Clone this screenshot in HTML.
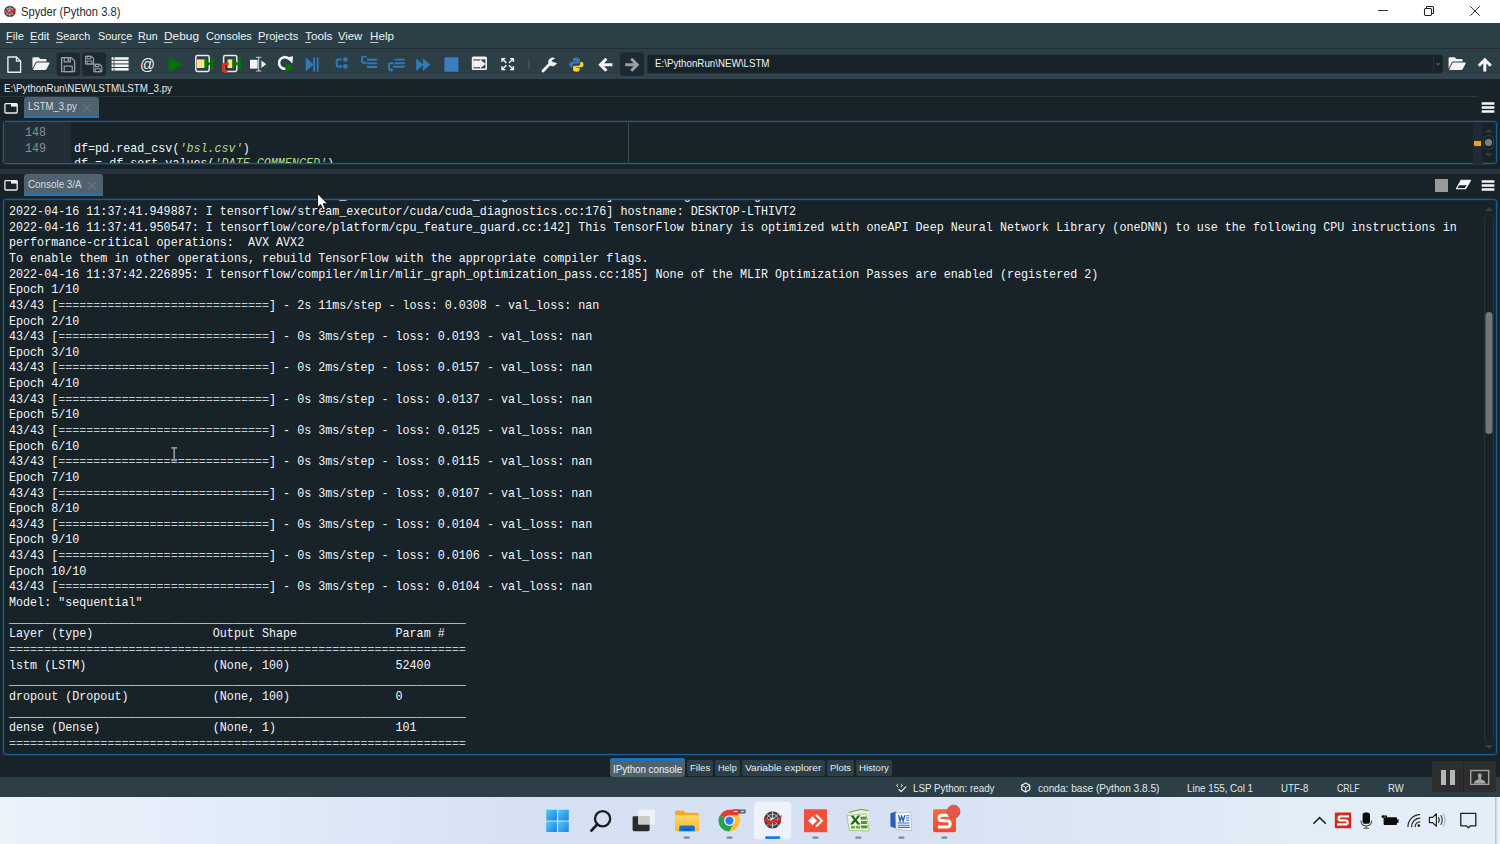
<!DOCTYPE html>
<html>
<head>
<meta charset="utf-8">
<title>Spyder (Python 3.8)</title>
<style>
*{box-sizing:border-box;margin:0;padding:0}
html,body{width:1500px;height:844px;overflow:hidden;background:#172229;font-family:"Liberation Sans",sans-serif;}
body{position:relative;color:#e6ebf0}
.abs{position:absolute}
#title{left:0;top:0;width:1500px;height:23px;background:#ffffff;color:#111;font-size:12px}
#title .t{left:21px;top:4px;font-size:12.3px;color:#1a1a1a;white-space:nowrap}
#menubar{left:0;top:23px;width:1500px;height:26px;background:#2d3f46;border-bottom:1px solid #222d36}

#menubar u{text-decoration:underline;text-underline-offset:1.500px;text-decoration-thickness:0.800px;text-decoration-color:rgba(238,242,245,.75)}
#toolbar{left:0;top:49px;width:1500px;height:29.5px;background:#2d3f46}
#pathrow{left:0;top:78.5px;width:1500px;height:18px;background:#172229}

.tabbar{left:0;width:1500px;background:#172229}
.tab{background:#50626d;color:#e8edf1;font-size:10.6px;border-bottom:2.500px solid #1f73b8;white-space:nowrap}
.pane{background:#172229;border:1px solid #1c5c90;border-radius:3px;box-shadow:0 0 0 1px rgba(28,92,144,.26), inset 0 0 0 1px rgba(28,92,144,.16)}
.mono{font-family:"Liberation Mono",monospace}
#console pre{position:absolute;left:5px;top:-11.635px;font-family:"Liberation Mono",monospace;font-size:13.244px;line-height:15.635px;color:#f4f6f7;white-space:pre;transform:scaleX(0.8849);transform-origin:0 0}
#statusbar{left:0;top:777px;width:1500px;height:20px;background:#2d3f46}

#taskbar{left:0;top:797px;width:1500px;height:47px;background:linear-gradient(90deg,#eaf2fa 0%,#e4edf9 12%,#dae5f6 27%,#d5e0f3 36%,#d7e1f3 60%,#dce7f5 73%,#e2edf7 87%,#e3eef8 100%)}
.btab{position:absolute;top:758px;height:20px;background:#2d3f46;color:#eef2f5;font-size:10.4px;padding-top:4px;text-align:center;white-space:nowrap}
.edl{font-size:13.244px;line-height:16px;white-space:pre;transform:scaleX(0.8849);transform-origin:0 0}
.fit{position:absolute;white-space:nowrap;transform-origin:0 50%;display:inline-block;line-height:1}
/*FIT-START*/
#f1{top:6.53px;transform:scaleX(0.9398)}
#f2{top:7.93px;transform:scaleX(0.9770)}
#f3{top:7.93px;transform:scaleX(1.0008)}
#f4{top:7.93px;transform:scaleX(0.9550)}
#f5{top:7.93px;transform:scaleX(0.9573)}
#f6{top:7.93px;transform:scaleX(0.9494)}
#f7{top:7.93px;transform:scaleX(1.0507)}
#f8{top:7.93px;transform:scaleX(0.9719)}
#f9{top:7.93px;transform:scaleX(0.9871)}
#f10{top:7.93px;transform:scaleX(1.0420)}
#f11{top:7.93px;transform:scaleX(0.9960)}
#f12{top:7.93px;transform:scaleX(1.0323)}
#f14{top:10.20px;transform:scaleX(0.9397)}
#f29{top:7.03px;transform:scaleX(0.8955)}
#f13{top:5.60px;transform:scaleX(0.9446)}
#f15{top:4.57px;transform:scaleX(0.9368)}
#f16{top:5.77px;transform:scaleX(0.9658)}
#f17{top:764.53px;transform:scaleX(0.9709)}
#f18{top:763.19px;transform:scaleX(0.9869)}
#f19{top:763.19px;transform:scaleX(0.9379)}
#f20{top:763.19px;transform:scaleX(1.0522)}
#f21{top:763.19px;transform:scaleX(0.9793)}
#f22{top:763.19px;transform:scaleX(0.9915)}
#f23{top:5.93px;transform:scaleX(0.9245)}
#f24{top:5.93px;transform:scaleX(0.9550)}
#f25{top:5.93px;transform:scaleX(0.9261)}
#f26{top:5.93px;transform:scaleX(0.9162)}
#f27{top:5.93px;transform:scaleX(0.8131)}
#f28{top:5.93px;transform:scaleX(0.8930)}
/*FIT-END*/
.eq{color:#c6cbce}
</style>
</head>
<body>
<!-- TITLE BAR -->
<div id="title" class="abs">
  <svg class="abs" style="left:3px;top:4px" width="14" height="15" viewBox="0 0 14 15">
    <circle cx="6.900" cy="7.400" r="5.700" fill="#3e3e3e"/>
    <path d="M6.900 1.700V13.100M1.200 7.400H12.600M2.900 3.400L10.900 11.400M10.900 3.400L2.900 11.400" stroke="#d8d8d8" stroke-width="0.700"/>
    <circle cx="6.900" cy="7.400" r="3.500" fill="none" stroke="#d8d8d8" stroke-width="0.600"/>
    <circle cx="6.900" cy="7.400" r="1.500" fill="#e8e8e8"/>
    <path d="M1.200 7.200L3.400 5.400L5.600 8L8.200 5.800L10.400 7L12.800 4.200L12.200 7.800L10.200 9.200L8.200 8L5.600 10L3.200 7.400Z" fill="#e0221e"/>
  </svg>
  <span class="fit" id="f1" style="left:21.2px;font-size:11.9px;color:#2a2a2a;--w:99.4;--b:16.6;">Spyder (Python 3.8)</span>
  <svg class="abs" style="left:1376px;top:4px" width="110" height="14" viewBox="0 0 110 14">
    <path d="M2 6.500H12" stroke="#333" stroke-width="1"/>
    <rect x="48.5" y="4.5" width="7" height="7" rx="1.2" fill="none" stroke="#222" stroke-width="1.1"/>
    <path d="M50.5 4V3.2Q50.5 2.5 51.3 2.5H56.3Q57.5 2.5 57.5 3.7V8.7Q57.5 9.5 56.8 9.5H56" fill="none" stroke="#222" stroke-width="1.1"/>
    <path d="M94.200 2.200L103.800 11.800M103.800 2.200L94.200 11.800" stroke="#333" stroke-width="1"/>
  </svg>
</div>

<!-- MENU BAR -->
<div id="menubar" class="abs">
  <span class="fit" id="f2" style="left:5.5px;font-size:11.3px;color:#eef2f5;--w:17.8;--b:17.5;"><u>F</u>ile</span>
  <span class="fit" id="f3" style="left:30px;font-size:11.3px;color:#eef2f5;--w:19.5;--b:17.5;"><u>E</u>dit</span>
  <span class="fit" id="f4" style="left:56.3px;font-size:11.3px;color:#eef2f5;--w:34.2;--b:17.5;"><u>S</u>earch</span>
  <span class="fit" id="f5" style="left:97.5px;font-size:11.3px;color:#eef2f5;--w:34.3;--b:17.5;">Sour<u>c</u>e</span>
  <span class="fit" id="f6" style="left:138.3px;font-size:11.3px;color:#eef2f5;--w:19.7;--b:17.5;"><u>R</u>un</span>
  <span class="fit" id="f7" style="left:164.3px;font-size:11.3px;color:#eef2f5;--w:35.0;--b:17.5;"><u>D</u>ebug</span>
  <span class="fit" id="f8" style="left:205.5px;font-size:11.3px;color:#eef2f5;--w:45.8;--b:17.5;">C<u>o</u>nsoles</span>
  <span class="fit" id="f9" style="left:258px;font-size:11.3px;color:#eef2f5;--w:40.3;--b:17.5;"><u>P</u>rojects</span>
  <span class="fit" id="f10" style="left:304.5px;font-size:11.3px;color:#eef2f5;--w:27.5;--b:17.5;"><u>T</u>ools</span>
  <span class="fit" id="f11" style="left:338.3px;font-size:11.3px;color:#eef2f5;--w:24.2;--b:17.5;"><u>V</u>iew</span>
  <span class="fit" id="f12" style="left:370px;font-size:11.3px;color:#eef2f5;--w:24;--b:17.5;"><u>H</u>elp</span>
</div>

<!-- TOOLBAR -->
<div id="toolbar" class="abs">
<div class="abs" style="left:0;top:24.5px;width:1500px;height:5px;background:#33434d"></div>
<svg class="abs" style="left:0;top:0" width="1500" height="31" viewBox="0 49 1500 31">
<g fill="none" stroke-linejoin="round" stroke-linecap="round">
<!-- new file -->
<path d="M7.9 57H16.4L20.6 61.2V72.2H7.9Z" stroke="#ececec" stroke-width="1.4"/>
<path d="M16.4 57V61.2H20.6" stroke="#ececec" stroke-width="1.2"/>
<!-- open folder -->
<g fill="#f4f4f4" stroke="none">
<path d="M32.4 58.6Q32.4 57.3 33.7 57.3H37.9Q38.6 57.3 39.1 57.8L40.4 59H45.2Q46.5 59 46.5 60.3V61.6H37.2Q35.9 61.6 35.4 62.7L32.4 68.6Z"/>
<path d="M37.3 62.6H48.9Q49.9 62.6 49.4 63.5L46.6 69.1Q46.2 69.9 45.2 69.9H33.6Q32.8 69.9 33.2 69.1L36 63.4Q36.4 62.6 37.3 62.6Z"/>
</g>
<!-- save (disabled) -->
<rect x="56.6" y="52.6" width="23.4" height="23.4" rx="3" fill="#1d2932" stroke="none"/>
<path d="M61.6 57.6H71.3L74.6 60.9V71.6H61.6Z" stroke="#9b9fa2" stroke-width="1.3"/>
<rect x="64.2" y="57.6" width="6.2" height="4.3" stroke="#9b9fa2" stroke-width="1.2"/>
<rect x="67.6" y="58.4" width="1.6" height="2.6" fill="#9b9fa2" stroke="none"/>
<rect x="64.2" y="66.2" width="8" height="5.4" stroke="#9b9fa2" stroke-width="1.2"/>
<!-- save all (disabled) -->
<rect x="82.2" y="52.6" width="23.8" height="23.4" rx="3" fill="#1d2932" stroke="none"/>
<g stroke="#9b9fa2" stroke-width="1.1">
<path d="M85.6 56.4H91.4L93.6 58.6V64H85.6Z"/>
<rect x="87.2" y="56.4" width="3.6" height="2.4"/>
<rect x="87" y="61" width="5" height="3"/>
<path d="M93.8 64.2H99.6L101.8 66.4V71.8H93.8Z"/>
<rect x="95.4" y="64.2" width="3.6" height="2.4"/>
<rect x="95.2" y="68.8" width="5" height="3"/>
</g>
<!-- list -->
<g fill="#f4f4f4" stroke="none">
<rect x="111.6" y="57.2" width="2" height="2.6"/><rect x="114.4" y="57.2" width="14.2" height="2.6"/>
<rect x="111.6" y="60.8" width="2" height="2.6"/><rect x="114.4" y="60.8" width="14.2" height="2.6"/>
<rect x="111.6" y="64.4" width="2" height="2.6"/><rect x="114.4" y="64.4" width="14.2" height="2.6"/>
<rect x="111.6" y="68" width="2" height="2.6"/><rect x="114.4" y="68" width="14.2" height="2.6"/>
</g>
<!-- play -->
<path d="M169.4 57.4L181.6 64.4L169.4 71.4Z" fill="#007600" stroke="#007600" stroke-width="0.6"/>
<!-- run cell -->
<rect x="195.8" y="55.6" width="13.4" height="15.8" rx="1.6" stroke="#ececec" stroke-width="1.500"/>
<rect x="197" y="59.4" width="8.4" height="8.6" fill="#fbe47c" stroke="none"/>
<path d="M204.4 58.8L210.8 63.8L204.4 68.8Z" fill="#007600" stroke="none"/>
<rect x="210.6" y="57.4" width="2.6" height="12" fill="#007600" stroke="none"/>
<!-- run cell advance -->
<rect x="223.6" y="55.6" width="13.2" height="15.8" rx="1.6" stroke="#ececec" stroke-width="1.500"/>
<rect x="227.6" y="59.4" width="6" height="8.6" fill="#fbe47c" stroke="none"/>
<path d="M232.2 58.8L238.6 63.8L232.200 68.8Z" fill="#007600" stroke="none"/>
<rect x="238.4" y="57.4" width="2.6" height="12" fill="#007600" stroke="none"/>
<path d="M228.8 63.8H224.4Q223.200 63.8 223.200 65V70.2Q223.200 71.4 224.4 71.4H227.4" stroke="#f3241b" stroke-width="2.300" stroke-linecap="butt"/>
<!-- run selection -->
<rect x="250" y="59.8" width="7.6" height="8.8" fill="#f4f4f4" stroke="none"/>
<path d="M256.4 57.2H261M256.4 71H261M258.7 57.2V71" stroke="#c8cbcd" stroke-width="1.1"/>
<path d="M261.4 60.4L266.2 64.2L261.4 68Z" fill="#f4f4f4" stroke="none"/>
<!-- rerun -->
<path d="M288.4 58.4A5.800 5.800 0 1 0 289.8 66" stroke="#f4f4f4" stroke-width="2.600" stroke-linecap="butt"/>
<path d="M285.8 57.4L293 56.2L292.4 63.6Z" fill="#f4f4f4" stroke="none"/>
<path d="M285.4 63.4L294 68L285.4 72.6Z" fill="#007600" stroke="none"/>
<!-- debug -->
<g fill="#2f7ab8" stroke="none">
<path d="M305.8 57.4L313.4 64.4L305.8 71.6Z"/>
<rect x="313.2" y="57.4" width="1.8" height="14.2"/>
<rect x="316.8" y="57.4" width="1.8" height="14.2"/>
</g>
<!-- step -->
<g stroke="#2f7ab8" stroke-width="2" stroke-linecap="butt">
<path d="M341.6 59.6H338Q336.6 59.6 336.6 61V65Q336.6 66.4 338 66.4H340.6"/>
</g>
<path d="M340.2 64.2L342.8 66.4L340.2 68.6Z" fill="#2f7ab8" stroke="none"/>
<circle cx="345.4" cy="59.6" r="2.300" fill="#2f7ab8" stroke="none"/>
<circle cx="345.4" cy="66.4" r="2.300" fill="#2f7ab8" stroke="none"/>
<!-- step into -->
<g stroke="#2f7ab8" stroke-width="1.900" stroke-linecap="butt">
<path d="M366.6 56.6H363.4Q362 56.6 362 58V61.4Q362 62.8 363.4 62.8H365.4"/>
<path d="M367 59.8H377.2M367 63.4H377.2M367 67H377.2"/>
</g>
<path d="M364.8 60.8L367.2 62.8L364.8 64.8Z" fill="#2f7ab8" stroke="none"/>
<!-- step return -->
<g stroke="#2f7ab8" stroke-width="1.900" stroke-linecap="butt">
<path d="M394.6 59.6H404.8M394.6 63.2H404.8M393 66.8H404.8"/>
<path d="M393.6 63.2H390.4Q389 63.2 389 64.6V68.6Q389 70 390.4 70H391.6"/>
</g>
<path d="M391 67.8L393.4 70L391 72.2Z" fill="#2f7ab8" stroke="none"/>
<!-- continue -->
<g fill="#2f7ab8" stroke="none">
<path d="M416.2 58.6L423.4 64.8L416.2 71Z"/>
<path d="M423 58.6L430.4 64.8L423 71Z"/>
</g>
<!-- stop -->
<rect x="444.4" y="57.2" width="14" height="14.6" rx="0.6" fill="#3a7ebd" stroke="none"/>
<!-- maximize pane -->
<rect x="471.8" y="56.4" width="15.2" height="13.6" rx="1.6" fill="#f4f4f4" stroke="none"/>
<rect x="473.4" y="59.4" width="12" height="9" fill="#2d3f46" stroke="none"/>
<path d="M473.2 60.6H480V59.3L485.6 63.9L480 68.5V67.2H473.2Z" fill="#f4f4f4" stroke="none"/>
<!-- fullscreen -->
<g stroke="#f4f4f4" stroke-width="1.4" stroke-linecap="butt" stroke-linejoin="miter">
<path d="M502 58.6L506.4 63M502 62V58.6H505.4"/>
<path d="M513.4 58.6L509 63M513.4 62V58.6H510"/>
<path d="M502 69.6L506.4 65.2M502 66.2V69.6H505.4"/>
<path d="M513.4 69.6L509 65.2M513.4 66.2V69.6H510"/>
</g>
<!-- separator -->
<rect x="528.2" y="59.4" width="1.2" height="9.6" fill="#4b5b66" stroke="none"/>
<!-- wrench -->
<path d="M543 71L551 62.6" stroke="#f4f4f4" stroke-width="2.8" stroke-linecap="round"/>
<path d="M554.2 58.2A4 4 0 1 0 556.4 63.2L552.6 62.6L551.4 60.4Z" fill="#f4f4f4" stroke="#f4f4f4" stroke-width="0.8"/>
<!-- python -->
<path d="M576 57.4Q573 57.4 573 59.6V61.4H576.8V62H571.2Q569.2 62 569.2 64.6Q569.2 67.2 571.2 67.2H572.6V65.2Q572.6 63.4 574.6 63.4H578.2Q579.8 63.4 579.8 61.8V59.6Q579.8 57.4 576 57.4Z" fill="#3c78b0" stroke="none"/>
<path d="M576.6 71.8Q579.6 71.8 579.6 69.6V67.8H575.8V67.2H581.6Q583.6 67.2 583.6 64.6Q583.6 62 581.6 62H580.2V64Q580.2 65.8 578.2 65.8H574.6Q573 65.8 573 67.4V69.6Q573 71.8 576.6 71.8Z" fill="#f7cf3f" stroke="none"/>
<!-- back arrow -->
<path d="M600.4 64.8H612.4M606.4 58.8L600.4 64.8L606.4 70.800" stroke="#f7f7f7" stroke-width="3" stroke-linecap="butt" stroke-linejoin="miter"/>
<!-- forward (disabled) -->
<rect x="620" y="52.6" width="24" height="23.4" rx="3" fill="#1d2932" stroke="none"/>
<path d="M625.200 64.8H637.2M631.2 58.8L637.2 64.8L631.2 70.800" stroke="#9b9fa2" stroke-width="3" stroke-linecap="butt" stroke-linejoin="miter"/>
<!-- path box -->
<rect x="647.4" y="54.8" width="795.4" height="18.4" rx="2.4" fill="#172229" stroke="none"/>
<rect x="1433" y="54.8" width="1" height="18.4" fill="#222e38" stroke="none"/>
<path d="M1435.6 63.2H1440.4L1438 65.8Z" fill="#4a5963" stroke="none"/>
<!-- folder right -->
<g fill="#f4f4f4" stroke="none" transform="translate(1416.2,0)">
<path d="M32.4 58.6Q32.4 57.3 33.7 57.3H37.9Q38.6 57.3 39.1 57.8L40.4 59H45.2Q46.5 59 46.5 60.3V61.6H37.2Q35.9 61.6 35.4 62.7L32.4 68.6Z"/>
<path d="M37.3 62.6H48.9Q49.9 62.6 49.4 63.5L46.6 69.1Q46.2 69.9 45.2 69.9H33.6Q32.8 69.9 33.2 69.1L36 63.4Q36.4 62.6 37.3 62.6Z"/>
</g>
<!-- up arrow -->
<path d="M1484.8 71.4V59.8M1478.800 65.800L1484.8 59.800L1490.800 65.800" stroke="#f7f7f7" stroke-width="3" stroke-linecap="butt" stroke-linejoin="miter"/>
</g>
</svg>
<span class="fit" id="f14" style="left:654.5px;font-size:10.4px;color:#f0f3f5;--w:114.5;--b:19;">E:\PythonRun\NEW\LSTM</span>
<span class="fit" id="f29" style="left:140.2px;font-size:16.5px;color:#f4f4f4;--w:15;--b:21;">@</span>

</div>

<!-- PATH ROW -->
<div id="pathrow" class="abs"><span class="fit" id="f13" style="left:4.3px;font-size:10.4px;color:#e8ecef;--w:168;--b:14.4;">E:\PythonRun\NEW\LSTM\LSTM_3.py</span></div>

<!-- EDITOR TABBAR -->
<div class="abs tabbar" style="top:97px;height:22px">
<div class="abs" style="left:0;top:-1px;width:1478px;height:1px;background:#2a3640"></div>
<svg class="abs" style="left:3px;top:5px" width="16" height="13" viewBox="0 0 16 13"><rect x="1.9" y="1.6" width="12.3" height="9.4" rx="1" fill="none" stroke="#f0f0f0" stroke-width="1.3"/><rect x="8" y="1.6" width="6.2" height="3" fill="#f0f0f0"/></svg>
<div class="abs tab" style="left:24px;top:0;width:75px;height:21px;border-radius:3px 3px 0 0"><span class="fit" id="f15" style="left:3.5px;font-size:10.2px;color:#d6dde2;--w:48.8;--b:13.200000000000003;">LSTM_3.py</span><svg class="abs" style="left:58px;top:6px" width="10" height="10" viewBox="0 0 10 10"><path d="M1.2 1.2L8.6 8.6M8.6 1.2L1.2 8.6" stroke="#6b7a85" stroke-width="1.1"/></svg></div>
<svg class="abs" style="left:1481px;top:5.300px" width="14" height="12" viewBox="0 0 14 12"><path d="M0.7 1.5H13.4M0.7 5.5H13.4M0.7 9.5H13.4" stroke="#f7f7f7" stroke-width="2.5"/></svg>
</div>

<!-- EDITOR PANE -->
<div id="editor" class="abs pane" style="left:3px;top:121px;width:1494px;height:43px">
<div class="abs" style="left:0;top:0;width:67px;height:100%;background:#212d37"></div>
<div class="abs mono" style="left:0;top:0;width:1480px;height:100%;overflow:hidden">
<div class="abs edl" style="left:21px;top:3px;color:#858f96">148</div>
<div class="abs edl" style="left:21px;top:19px;color:#858f96">149</div>
<div class="abs edl" style="left:70px;top:19px;color:#f4f6f7">df=pd.read_csv(<i style="color:#aedb84">'bsl.csv'</i>)</div>
<div class="abs edl" style="left:70px;top:34px;color:#f4f6f7">df = df.sort_values(<i style="color:#aedb84">'DATE_COMMENCED'</i>)</div>
</div>
<div class="abs" style="left:623.5px;top:1px;width:1px;height:41px;background:#3a4650"></div>
<div class="abs" style="left:1468.500px;top:1px;width:9px;height:41px;background:#1f2a32"></div>
<div class="abs" style="left:1469.600px;top:18.600px;width:7px;height:5px;background:#e9a21a"></div>
<svg class="abs" style="left:1476.700px;top:0.300px" width="14" height="41" viewBox="0 0 14 41"><path d="M3.5 10.5L7.5 6.5L11.5 10.5Z" fill="#2d3944"/><path d="M3.5 31L7.5 35L11.5 31Z" fill="#2d3944"/><rect x="2.5" y="13.5" width="10" height="14" rx="4" fill="none" stroke="#2d3944" stroke-width="1"/><circle cx="7.5" cy="20.5" r="3.6" fill="#7a7e82"/></svg>
</div>

<!-- SPLITTER -->
<div class="abs" style="left:0;top:168.5px;width:1500px;height:5px;background:#27333c"></div>

<!-- CONSOLE TABBAR -->
<div class="abs tabbar" style="top:174px;height:22px">
<svg class="abs" style="left:3px;top:5px" width="16" height="13" viewBox="0 0 16 13"><rect x="1.9" y="1.6" width="12.3" height="9.4" rx="1" fill="none" stroke="#f0f0f0" stroke-width="1.3"/><rect x="8" y="1.6" width="6.2" height="3" fill="#f0f0f0"/></svg>
<div class="abs tab" style="left:24px;top:0;width:79px;height:21.5px;border-radius:3px 3px 0 0"><span class="fit" id="f16" style="left:3.7px;font-size:10.2px;color:#d6dde2;--w:53.6;--b:14.4;">Console 3/A</span><svg class="abs" style="left:62.5px;top:6.5px" width="10" height="10" viewBox="0 0 10 10"><path d="M1.2 1.2L8.6 8.6M8.6 1.2L1.2 8.6" stroke="#6b7a85" stroke-width="1.1"/></svg></div>
<div class="abs" style="left:1435px;top:5px;width:12.5px;height:12.5px;background:#9a9a9a"></div>
<svg class="abs" style="left:1455px;top:4px" width="18" height="14" viewBox="0 0 18 14"><path d="M6.2 2.2H15.6L10.6 10.8H1.4Z" fill="#f7f7f7"/><path d="M3.6 7.2H11.6L9.8 10H2Z" fill="#172229"/><path d="M6.2 2.2H15.6L10.6 10.8H1.4Z" fill="none" stroke="#f7f7f7" stroke-width="1.1" stroke-linejoin="round"/></svg>
<svg class="abs" style="left:1481px;top:5.5px" width="14" height="12" viewBox="0 0 14 12"><path d="M0.7 1.5H13.4M0.7 5.5H13.4M0.7 9.5H13.4" stroke="#f7f7f7" stroke-width="2.5"/></svg>
</div>

<!-- CONSOLE PANE -->
<div id="console" class="abs pane" style="left:3px;top:199px;width:1494px;height:556px;overflow:hidden">
<pre>2022-04-16 11:37:41.949877: I tensorflow/stream_executor/cuda/cuda_diagnostics.cc:169] retrieving CUDA diagnostic information for host: DESKTOP-LTHIVT2
2022-04-16 11:37:41.949887: I tensorflow/stream_executor/cuda/cuda_diagnostics.cc:176] hostname: DESKTOP-LTHIVT2
2022-04-16 11:37:41.950547: I tensorflow/core/platform/cpu_feature_guard.cc:142] This TensorFlow binary is optimized with oneAPI Deep Neural Network Library (oneDNN) to use the following CPU instructions in
performance-critical operations:  AVX AVX2
To enable them in other operations, rebuild TensorFlow with the appropriate compiler flags.
2022-04-16 11:37:42.226895: I tensorflow/compiler/mlir/mlir_graph_optimization_pass.cc:185] None of the MLIR Optimization Passes are enabled (registered 2)
Epoch 1/10
43/43 [<span class="eq">==============================</span>] - 2s 11ms/step - loss: 0.0308 - val_loss: nan
Epoch 2/10
43/43 [<span class="eq">==============================</span>] - 0s 3ms/step - loss: 0.0193 - val_loss: nan
Epoch 3/10
43/43 [<span class="eq">==============================</span>] - 0s 2ms/step - loss: 0.0157 - val_loss: nan
Epoch 4/10
43/43 [<span class="eq">==============================</span>] - 0s 3ms/step - loss: 0.0137 - val_loss: nan
Epoch 5/10
43/43 [<span class="eq">==============================</span>] - 0s 3ms/step - loss: 0.0125 - val_loss: nan
Epoch 6/10
43/43 [<span class="eq">==============================</span>] - 0s 3ms/step - loss: 0.0115 - val_loss: nan
Epoch 7/10
43/43 [<span class="eq">==============================</span>] - 0s 3ms/step - loss: 0.0107 - val_loss: nan
Epoch 8/10
43/43 [<span class="eq">==============================</span>] - 0s 3ms/step - loss: 0.0104 - val_loss: nan
Epoch 9/10
43/43 [<span class="eq">==============================</span>] - 0s 3ms/step - loss: 0.0106 - val_loss: nan
Epoch 10/10
43/43 [<span class="eq">==============================</span>] - 0s 3ms/step - loss: 0.0104 - val_loss: nan
Model: "sequential"
_________________________________________________________________
Layer (type)                 Output Shape              Param #
<span class="eq">=================================================================</span>
lstm (LSTM)                  (None, 100)               52400
_________________________________________________________________
dropout (Dropout)            (None, 100)               0
_________________________________________________________________
dense (Dense)                (None, 1)                 101
<span class="eq">=================================================================</span></pre>
<svg class="abs" style="left:1479px;top:5px" width="12" height="548" viewBox="0 0 12 548"><path d="M2 6L6 2L10 6Z" fill="#34414b"/><path d="M2 540L6 544L10 540Z" fill="#34414b"/><rect x="1.5" y="9.5" width="9" height="528" rx="4" fill="none" stroke="#26323c" stroke-width="1"/><rect x="2.5" y="107" width="7" height="122" rx="3.5" fill="#71767a"/></svg>
</div>

<!-- BOTTOM TABS -->
<div class="abs" style="left:609.5px;top:758px;width:75.5px;height:19px;background:#50616c;border-top:3px solid #1a72bb;border-radius:2px 2px 3px 3px"></div>
<div class="btab" style="left:609.5px;width:75.5px;top:758px;background:none;padding-top:6px"></div><span class="fit" id="f17" style="left:612.8px;font-size:10px;color:#eef2f5;--w:69.1;--b:773;">IPython console</span>
<div class="btab" style="left:687px;width:26px;top:760px;height:15.5px;padding-top:2px;border-radius:2px"></div><span class="fit" id="f18" style="left:689.8px;font-size:9.7px;color:#e6ebef;--w:20.2;--b:771.4;">Files</span>
<div class="btab" style="left:715px;width:25px;top:760px;height:15.5px;padding-top:2px;border-radius:2px"></div><span class="fit" id="f19" style="left:718.3px;font-size:9.7px;color:#e6ebef;--w:18.7;--b:771.4;">Help</span>
<div class="btab" style="left:742px;width:83px;top:760px;height:15.5px;padding-top:2px;border-radius:2px"></div><span class="fit" id="f20" style="left:745.3px;font-size:9.7px;color:#e6ebef;--w:76.3;--b:771.4;">Variable explorer</span>
<div class="btab" style="left:826.5px;width:27px;top:760px;height:15.5px;padding-top:2px;border-radius:2px"></div><span class="fit" id="f21" style="left:829.8px;font-size:9.7px;color:#e6ebef;--w:21.1;--b:771.4;">Plots</span>
<div class="btab" style="left:855.5px;width:36px;top:760px;height:15.5px;padding-top:2px;border-radius:2px"></div><span class="fit" id="f22" style="left:858.9px;font-size:9.7px;color:#e6ebef;--w:29.9;--b:771.4;">History</span>

<!-- STATUS BAR -->
<div id="statusbar" class="abs">
<svg class="abs" style="left:894px;top:4px" width="14" height="13" viewBox="0 0 14 13"><path d="M4.200 3.200L2.600 4.600L4.200 6M6.800 3.200L8.400 4.600L6.800 6" fill="none" stroke="#e8edf0" stroke-width="1"/><path d="M4.600 8.200L7.200 10.700L12 5.700" fill="none" stroke="#e8edf0" stroke-width="1.200"/></svg>
<span class="fit" id="f23" style="left:912.5px;font-size:10.6px;color:#e2e7eb;--w:81.5;--b:14.9;">LSP Python: ready</span>
<svg class="abs" style="left:1020px;top:4px" width="12" height="13" viewBox="0 0 12 13"><path d="M5.700 1.900L9.700 4.200V8.800L5.700 11.100L1.700 8.800V4.200Z" fill="none" stroke="#e8edf0" stroke-width="1.200" stroke-linejoin="round"/><path d="M1.700 4.200L5.700 6.500L9.700 4.200M5.700 6.500V11.100" fill="none" stroke="#e8edf0" stroke-width="1"/></svg>
<span class="fit" id="f24" style="left:1037.5px;font-size:10.6px;color:#e2e7eb;--w:121.5;--b:14.9;">conda: base (Python 3.8.5)</span>
<span class="fit" id="f25" style="left:1186.5px;font-size:10.6px;color:#e2e7eb;--w:66.0;--b:14.9;">Line 155, Col 1</span>
<span class="fit" id="f26" style="left:1281px;font-size:10.6px;color:#e2e7eb;--w:27.5;--b:14.9;">UTF-8</span>
<span class="fit" id="f27" style="left:1336.5px;font-size:10.6px;color:#e2e7eb;--w:22.5;--b:14.9;">CRLF</span>
<span class="fit" id="f28" style="left:1387.6px;font-size:10.6px;color:#e2e7eb;--w:15.6;--b:14.9;">RW</span>
</div>

<!-- TASKBAR -->
<div id="taskbar" class="abs">
<svg class="abs" style="left:0;top:0" width="1500" height="47" viewBox="0 797 1500 47">
<defs>
<linearGradient id="wg" x1="0" y1="0" x2="1" y2="1"><stop offset="0" stop-color="#58c8f8"/><stop offset="1" stop-color="#1a84dc"/></linearGradient>
<linearGradient id="fg" x1="0" y1="0" x2="0" y2="1"><stop offset="0" stop-color="#ffd86a"/><stop offset="1" stop-color="#f7b92e"/></linearGradient>
<linearGradient id="sg" x1="0" y1="0" x2="0" y2="1"><stop offset="0" stop-color="#f46a3c"/><stop offset="1" stop-color="#ee4a2c"/></linearGradient>
</defs>
<!-- windows -->
<g fill="url(#wg)">
<rect x="546.2" y="809.8" width="10.8" height="10.6" rx="0.8"/><rect x="558" y="809.8" width="10.8" height="10.6" rx="0.8"/>
<rect x="546.2" y="821.4" width="10.8" height="10.6" rx="0.8"/><rect x="558" y="821.4" width="10.8" height="10.6" rx="0.8"/>
</g>
<!-- search -->
<circle cx="602.6" cy="818.8" r="7.6" fill="none" stroke="#1c1c1c" stroke-width="2.3"/>
<path d="M597.2 824.4L591.4 830.6" stroke="#1c1c1c" stroke-width="2.8" stroke-linecap="round"/>
<!-- task view -->
<rect x="632.6" y="816.2" width="17" height="15" rx="1.4" fill="#2a2a2a"/>
<rect x="638" y="809.8" width="17" height="14.6" rx="1.4" fill="#f2f3f5" fill-opacity="0.86"/>
<rect x="638" y="816.2" width="11.6" height="8.2" fill="#c9c9c9"/>
<!-- explorer -->
<path d="M675.2 812.2Q675.2 810.4 677 810.4H682.6Q683.6 810.4 684.2 811.2L685.4 812.8H697Q698.8 812.8 698.8 814.6V829.4Q698.8 831.2 697 831.2H677Q675.2 831.2 675.2 829.4Z" fill="#f0a81c"/>
<path d="M675.2 815.2H698.8V829.4Q698.8 831.2 697 831.2H677Q675.2 831.2 675.2 829.4Z" fill="url(#fg)"/>
<path d="M679.2 831.2V827.4Q679.2 825.4 681.2 825.4H692.8Q694.8 825.4 694.8 827.4V831.2Z" fill="#1273cf"/>
<rect x="683" y="828.6" width="8" height="1.6" rx="0.8" fill="#0c5aa8"/>
<rect x="683.6" y="836.6" width="6.2" height="2.2" rx="1.1" fill="#7f8792"/>
<!-- chrome -->
<circle cx="729.4" cy="820.6" r="10.8" fill="#fff"/>
<path d="M729.4 820.6L720.05 815.2A10.8 10.8 0 0 1 738.75 815.2Z" fill="#e33e2b"/>
<path d="M729.4 809.8A10.8 10.8 0 0 1 738.75 815.2H729.4Z" fill="#e33e2b"/>
<path d="M720.05 815.2A10.8 10.8 0 0 0 729.4 831.4L734.1 823.3L729.4 820.6Z" fill="#2da04a"/>
<path d="M720.05 815.2L724.7 823.3L729.4 831.4A10.8 10.8 0 0 1 720.05 815.2Z" fill="#2da04a"/>
<path d="M738.75 815.2A10.8 10.8 0 0 1 729.4 831.4L734.1 823.3Q735.6 820 734.1 817.9L729.4 815.2Z" fill="#f7c02d"/>
<circle cx="729.4" cy="820.6" r="5.3" fill="#fff"/>
<circle cx="729.4" cy="820.6" r="4.2" fill="#2f7be8"/>
<rect x="732.2" y="809.4" width="13.4" height="4.2" rx="0.8" fill="#555b66"/>
<rect x="732.2" y="809.4" width="7" height="4.2" rx="0.8" fill="#d6362c"/>
<rect x="733.6" y="810.8" width="4" height="1.3" fill="#f6d6d2"/><rect x="740.8" y="810.8" width="3.4" height="1.3" fill="#d8dade"/>
<rect x="726.4" y="836.6" width="6.2" height="2.2" rx="1.1" fill="#7f8792"/>
<!-- spyder active -->
<rect x="754" y="801.8" width="37" height="37.4" rx="4" fill="#eef3fb"/>
<circle cx="772.6" cy="819.8" r="8.600" fill="#404040"/>
<path d="M772.6 811.200V828.400M764 819.8H781.200M766.500 813.700L778.700 825.900M778.700 813.700L766.500 825.900" stroke="#d4d7dc" stroke-width="0.900"/>
<circle cx="772.6" cy="819.8" r="2.400" fill="#e4e7ec"/>
<circle cx="772.6" cy="819.8" r="5.600" fill="none" stroke="#d4d7dc" stroke-width="0.800"/>
<path d="M763.2 819.4L766 817.2L769.6 821.8L773.6 818.4L777.6 820.2L782 814.6L780.6 820.8L777.6 823.2L773.8 821.6L769.4 825L765.2 820.4Z" fill="#e8201c"/>
<rect x="765" y="836.2" width="15.4" height="2.9" rx="1.45" fill="#1a7bdc"/>
<!-- anydesk -->
<rect x="804" y="809.2" width="23" height="23" rx="0.6" fill="#f0503a"/>
<path d="M808.2 820.7L812.6 816.3L817 820.7L812.6 825.1Z" fill="#fff"/>
<path d="M815.4 815.6L816.8 814.2L823.3 820.7L816.8 827.2L815.4 825.8L820.5 820.7Z" fill="#fff"/>
<rect x="812.4" y="836.6" width="6.2" height="2.2" rx="1.1" fill="#7f8792"/>
<!-- excel -->
<path d="M848.6 812.4L861 809.4L868.6 810.6V828.8L852.6 830.4Z" fill="#e9f0e3"/>
<path d="M848.6 812.4L861 809.4L868.6 810.6" fill="none" stroke="#79b257" stroke-width="1.3"/>
<path d="M847 815.6L866.2 813.8L869.2 831L849.2 830.4Z" fill="#f4f8f0" stroke="#8fbf6e" stroke-width="0.8"/>
<rect x="860.6" y="816.6" width="6" height="3" fill="#4e9a2e" transform="rotate(-2 863 818)"/>
<rect x="860.9" y="821" width="6" height="3" fill="#4e9a2e"/>
<rect x="861.1" y="825.4" width="6.4" height="3" fill="#4e9a2e"/>
<rect x="851" y="825.8" width="4.2" height="2.8" fill="#6fae4c"/><rect x="856" y="825.8" width="4.2" height="2.8" fill="#6fae4c"/>
<path d="M850.6 815.8L853.6 815.6L855.4 818.4L857.6 815.4L860.4 815.2L856.8 820L860.6 824.6H857.4L855.2 821.8L852.8 824.6H849.8L853.8 819.8Z" fill="#1f6a14"/>
<rect x="855.2" y="836.6" width="6.2" height="2.2" rx="1.1" fill="#7f8792"/>
<!-- word -->
<path d="M891.4 812.8L902 809.6L910.4 810.8V827.2L895.6 829.4Z" fill="#dfe8f6"/>
<path d="M890.4 813.2L896.2 811.6V828.6L890.4 826.6Z" fill="#2d62b3"/>
<path d="M895.6 813L910.8 812L911.6 830.6L896 829.4Z" fill="#f6f9fd" stroke="#9db4d8" stroke-width="0.7"/>
<path d="M898.6 815.2L900 821L901.6 816.4L903.2 821L904.8 815.2" fill="none" stroke="#2d62b3" stroke-width="1.4"/>
<path d="M906 815.8H909.4M906 818H909.4M906 820.2H909.4M897.6 823H909.6M897.6 825.2H909.8M897.8 827.4H910" stroke="#3c6fc0" stroke-width="1.1"/>
<rect x="898.4" y="836.6" width="6.2" height="2.2" rx="1.1" fill="#7f8792"/>
<!-- snagit -->
<rect x="933" y="809.2" width="23" height="23" rx="2.2" fill="url(#sg)"/>
<path d="M951 815.200H942.200Q939 815.200 939 818Q939 820.800 942.200 820.800H947Q950.200 820.800 950.200 823.900Q950.200 827 947 827H938" fill="none" stroke="#fff" stroke-width="2.900" stroke-linecap="butt"/>
<circle cx="953.6" cy="811.6" r="6.4" fill="#e5594c" stroke="#b4554c" stroke-width="0.9"/>
<rect x="941.2" y="836.6" width="6.2" height="2.2" rx="1.1" fill="#7f8792"/>
<!-- tray -->
<path d="M1313.4 823.8L1319.6 817.6L1325.8 823.8" fill="none" stroke="#1f1f1f" stroke-width="1.5"/>
<rect x="1334.8" y="812.6" width="16.4" height="15.6" rx="1" fill="#d8281c"/>
<path d="M1349 816.4H1341Q1338.6 816.4 1338.6 818.4Q1338.6 820.4 1341 820.4H1345Q1347.6 820.4 1347.6 822.4Q1347.6 824.4 1345 824.4H1337" fill="none" stroke="#fff" stroke-width="2.3"/>
<rect x="1362.6" y="812.6" width="7.4" height="11.2" rx="2.6" fill="#0c0c0c"/>
<path d="M1361 820.6Q1361 826 1366.3 826Q1371.6 826 1371.6 820.6M1366.3 826V828.2M1363.6 828.2H1369" fill="none" stroke="#4c4c4c" stroke-width="1.1"/>
<rect x="1383.6" y="817.2" width="13.4" height="7.8" rx="1" fill="#0c0c0c"/>
<rect x="1397" y="819.4" width="1.6" height="3.4" fill="#0c0c0c"/>
<path d="M1382 816.2H1386.4V818.6" fill="none" stroke="#0c0c0c" stroke-width="1.2"/>
<circle cx="1382.8" cy="816.8" r="1.3" fill="#0c0c0c"/>
<g fill="none" stroke="#2a2a2a" stroke-width="1.2" stroke-linecap="round">
<path d="M1408 826.4A12 12 0 0 1 1419.6 814.6"/>
<path d="M1411.6 826.6A8.4 8.4 0 0 1 1419.8 818.2"/>
<path d="M1415.2 826.6A4.8 4.8 0 0 1 1419.8 821.8"/>
</g>
<circle cx="1418.8" cy="825.6" r="1.3" fill="#1c1c1c"/>
<path d="M1429.4 817.4H1432.6L1436.4 813.8V826.2L1432.6 822.6H1429.4Z" fill="none" stroke="#1f1f1f" stroke-width="1.2" stroke-linejoin="round"/>
<path d="M1438.6 817.6Q1440 820 1438.6 822.4" fill="none" stroke="#1f1f1f" stroke-width="1.1" stroke-linecap="round"/>
<path d="M1441 815.6Q1443.400 820 1441 824.4" fill="none" stroke="#3c3c3c" stroke-width="1.1" stroke-linecap="round"/>
<path d="M1443.600 813.8Q1446.600 820 1443.600 826.2" fill="none" stroke="#a5abb2" stroke-width="1" stroke-linecap="round"/>
<path d="M1460.800 813.400H1475.800V825.800H1470.400L1468.300 827.900L1466.200 825.800H1460.800Z" fill="none" stroke="#1f1f1f" stroke-width="1.3" stroke-linejoin="round"/>
<rect x="1495.400" y="797" width="1" height="47" fill="#aab1ba"/>
</svg>
</div>
<!-- recorder overlay -->
<div class="abs" style="left:1432px;top:761px;width:63.500px;height:31px;background:#2d2f2f"></div>
<div class="abs" style="left:1463px;top:761px;width:1px;height:31px;background:#232525"></div>
<div class="abs" style="left:1440.800px;top:770px;width:5.200px;height:14.800px;background:#b4b8b6"></div>
<div class="abs" style="left:1449.600px;top:770px;width:5.200px;height:14.800px;background:#b4b8b6"></div>
<svg class="abs" style="left:1469px;top:769px" width="22" height="17" viewBox="0 0 22 17"><rect x="1.700" y="1.500" width="18" height="13.800" fill="none" stroke="#a4a8a6" stroke-width="1.300"/><path d="M5 14.600Q5.400 11.600 8.600 10.800Q9.600 10.400 9.600 9Q8.600 7.400 9 5.800Q9.400 4.200 10.800 4.200Q12.200 4.200 12.600 5.800Q13 7.400 12 9Q12 10.400 13 10.800Q16.200 11.600 16.600 14.600Z" fill="#a4a8a6"/></svg>
<!-- mouse cursor -->
<svg class="abs" style="left:316px;top:192px" width="14" height="20" viewBox="0 0 14 20"><path d="M1.500 1.500V15.500L4.800 12.600L7 17.800L9.400 16.800L7.200 11.800H11.600Z" fill="#ffffff" stroke="#111" stroke-width="0.900" stroke-linejoin="round"/></svg>
<svg class="abs" style="left:169px;top:446px" width="10" height="16" viewBox="0 0 10 16"><path d="M2.300 1.800H8M2.300 14.400H8M5.200 1.800V14.400" stroke="#8f9397" stroke-width="1.700" fill="none"/></svg>
</body>
</html>
